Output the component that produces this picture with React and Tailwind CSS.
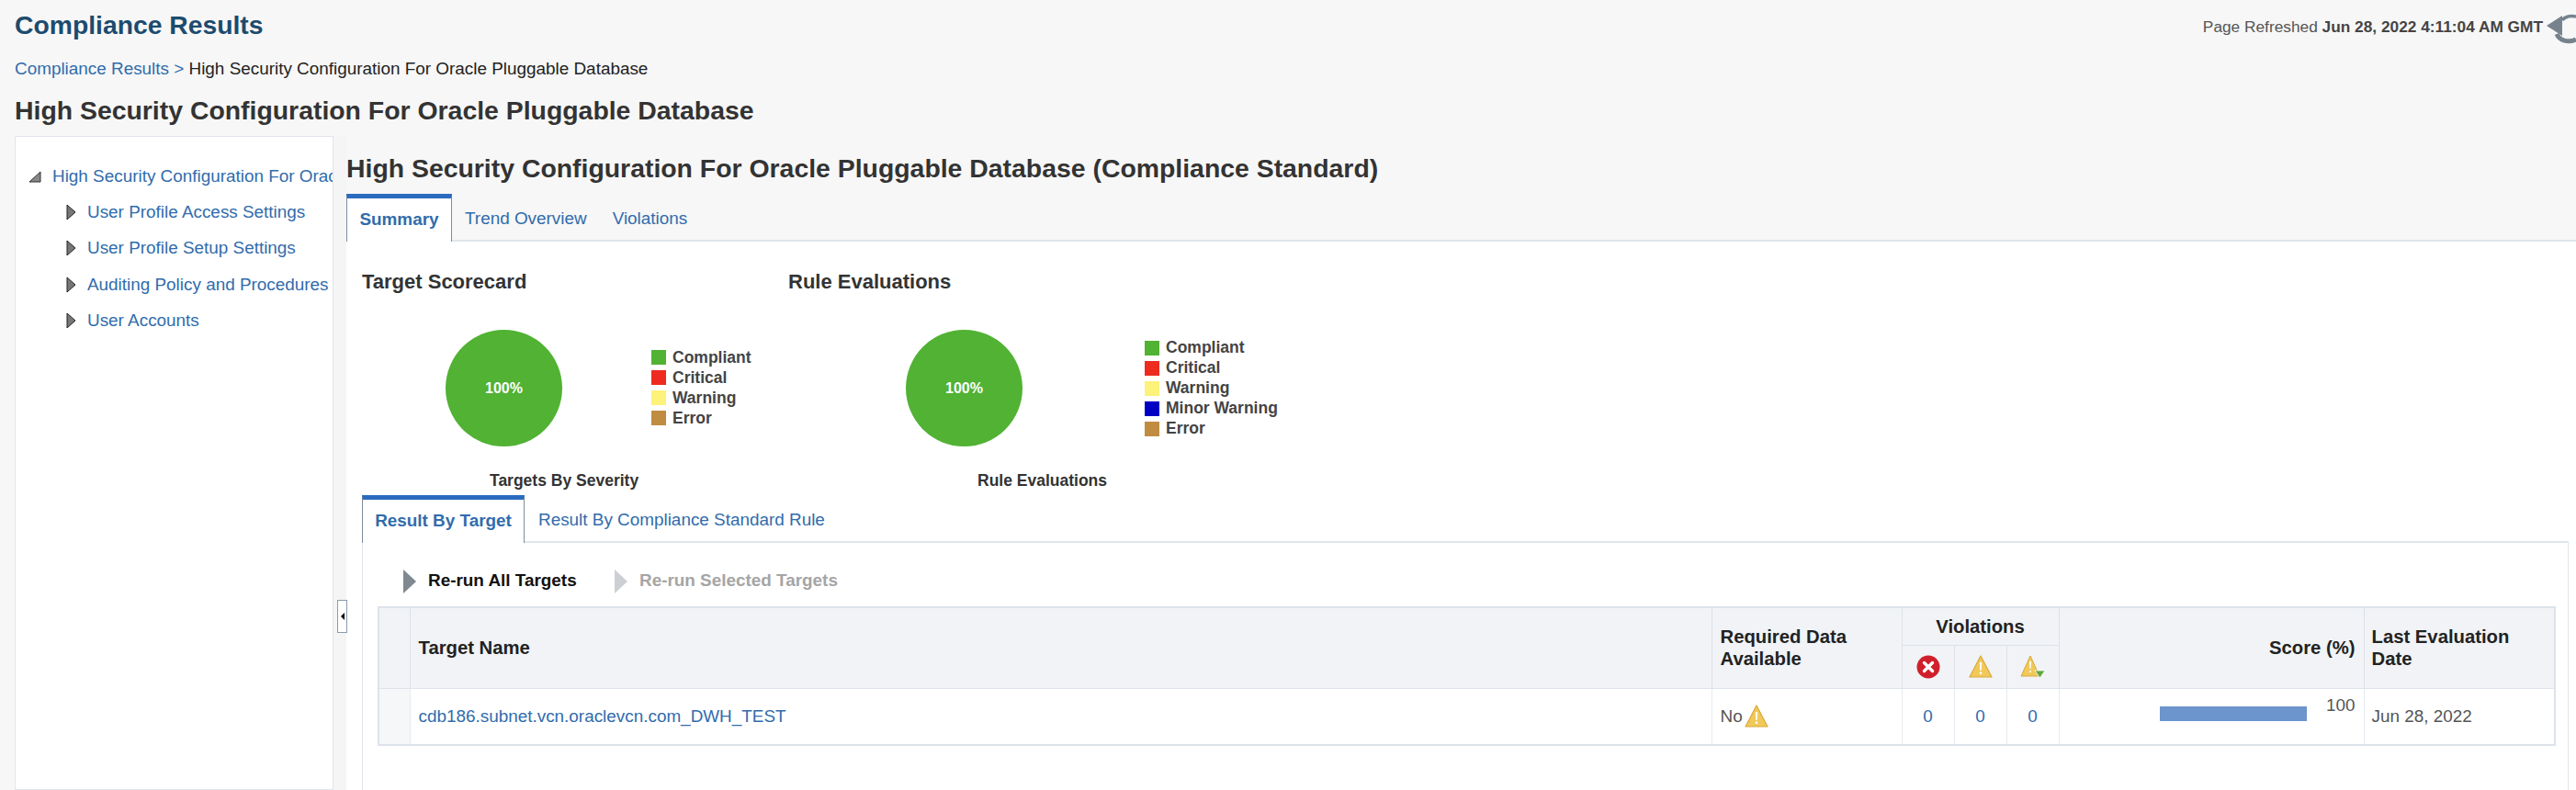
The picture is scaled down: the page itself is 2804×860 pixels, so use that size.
import React from 'react'

const LEGEND_TARGET = [
  { label: 'Compliant', color: 'bg-[#51b233]' },
  { label: 'Critical', color: 'bg-[#ed2c1f]' },
  { label: 'Warning', color: 'bg-[#fdf27a]' },
  { label: 'Error', color: 'bg-[#c08c42]' },
]

const LEGEND_RULE = [
  { label: 'Compliant', color: 'bg-[#51b233]' },
  { label: 'Critical', color: 'bg-[#ed2c1f]' },
  { label: 'Warning', color: 'bg-[#fdf27a]' },
  { label: 'Minor Warning', color: 'bg-[#0000c4]' },
  { label: 'Error', color: 'bg-[#c08c42]' },
]

const TREE = ['User Profile Access Settings', 'User Profile Setup Settings', 'Auditing Policy and Procedures', 'User Accounts']

function Warn({ className }) {
  return (
    <svg viewBox="0 0 26 25" className={className}>
      <path d="M13 1 L25 24 L1 24 Z" fill="#f0c95a" stroke="#d9a93a" strokeWidth="1.2" strokeLinejoin="round" />
      <path d="M11.8 8 h2.4 l-.5 9 h-1.4 Z" fill="#fff" />
      <rect x="11.8" y="18.5" width="2.4" height="2.4" fill="#fff" />
    </svg>
  )
}

function Chart({ legend, caption, className, pieClass, legendClass, captionClass }) {
  return (
    <div className={`flex flex-col shrink-0 ${className}`}>
      <div className={`flex items-center h-[127px] ${pieClass}`}>
        <div className="w-[127px] h-[127px] rounded-full bg-[#51b233] flex items-center justify-center text-white text-[16px] font-bold">
          100%
        </div>
        <div className={`flex flex-col gap-[6px] ${legendClass}`}>
          {legend.map(item => (
            <div key={item.label} className="flex items-center h-[16px] gap-[7px]">
              <span className={`w-[16px] h-[16px] ${item.color}`} />
              <span className="text-[17.5px] font-bold text-[#444]">{item.label}</span>
            </div>
          ))}
        </div>
      </div>
      <div className={`text-[17.5px] font-bold text-[#333] leading-[20px] mt-[27px] ${captionClass}`}>{caption}</div>
    </div>
  )
}

export default function App() {
  return (
    <div className="w-[2804px] h-[860px] overflow-hidden bg-[#f7f7f7] text-[#333] font-['Liberation_Sans',Arial,sans-serif]">
      {/* Header */}
      <div className="flex justify-between items-start pl-4 h-[54px]">
        <h1 className="text-[28.3px] leading-[32px] mt-[11px] font-bold text-[#1d4b6e]">Compliance Results</h1>
        <div className="flex items-start pt-[18px]">
          <span className="text-[17.3px] leading-[22px] text-[#555]">
            Page Refreshed <b className="text-[#444]">Jun 28, 2022 4:11:04 AM GMT</b>
          </span>
          <svg viewBox="0 0 34 40" className="w-[34px] h-[40px] ml-[2px] -mt-[8px] shrink-0">
            <path d="M2 18 L19 7 V29 Z" fill="#76838e" />
            <path d="M19 12 C22 8, 28 7, 34 8" fill="none" stroke="#76838e" strokeWidth="3.5" />
            <path d="M13 27 C16 34, 25 37, 34 33" fill="none" stroke="#76838e" strokeWidth="5" />
          </svg>
        </div>
      </div>
      <div className="pl-4 text-[18.9px] leading-[24px] mt-[9px] text-[#222]">
        <a className="text-[#316cac]">Compliance Results &gt;</a> High Security Configuration For Oracle Pluggable Database
      </div>
      <h2 className="pl-4 text-[28.4px] leading-[32px] font-bold text-[#333] mt-[17px]">High Security Configuration For Oracle Pluggable Database</h2>

      <div className="flex mt-[12px] pl-4 h-[712px]">
        {/* Tree */}
        <aside className="w-[347px] bg-white border border-[#e1e6ec] pt-[31px] overflow-hidden shrink-0">
          <div className="flex items-center h-[24px] whitespace-nowrap">
            <svg viewBox="0 0 14 14" className="w-[14px] h-[14px] ml-[14px] mr-[12px] shrink-0">
              <path d="M13 2 V13 H1 Z" fill="#888" stroke="#333" />
            </svg>
            <a className="text-[18.9px] text-[#316cac]">High Security Configuration For Oracle Pluggable Database</a>
          </div>
          <div className="mt-[15px] flex flex-col gap-[15.4px]">
            {TREE.map(label => (
              <div key={label} className="flex items-center h-[24px] pl-[55px] whitespace-nowrap">
                <svg viewBox="0 0 11 18" className="w-[11px] h-[18px] mr-[12px] shrink-0">
                  <path d="M1 1 L10 9 L1 17 Z" fill="#777" stroke="#222" />
                </svg>
                <a className="text-[18.9px] text-[#316cac]">{label}</a>
              </div>
            ))}
          </div>
        </aside>

        {/* Splitter */}
        <div className="w-[14px] bg-[#f5f5f5] pt-[505px] pl-[4px] shrink-0">
          <div className="relative w-[11px] h-[36px] bg-white border border-[#8a9aae] flex items-center justify-center">
            <span className="w-0 h-0 border-y-[4px] border-y-transparent border-r-[4px] border-r-black" />
          </div>
        </div>

        {/* Main */}
        <main className="flex-1 min-w-0 flex flex-col">
          <h2 className="text-[28.4px] leading-[32px] font-bold text-[#333] mt-[19px]">High Security Configuration For Oracle Pluggable Database (Compliance Standard)</h2>
          <div className="flex items-stretch h-[52px] mt-[12px] border-b-2 border-[#e1e6ec] text-[18.9px] shrink-0">
            <div className="w-[115px] border-t-[5px] border-t-[#2a6bc0] border-x border-x-[#7f8c99] bg-white -mb-[2px] flex items-center justify-center font-bold text-[#316cac]">Summary</div>
            <a className="ml-[14px] pt-[5px] flex items-center text-[#316cac]">Trend Overview</a>
            <a className="ml-[28px] pt-[5px] flex items-center text-[#316cac]">Violations</a>
          </div>

          <div className="flex-1 bg-white pl-[17px] pr-[8px]">
            <div className="flex mt-[31px] h-[24px] items-center text-[22px] font-bold text-[#333]">
              <span className="w-[464px]">Target Scorecard</span>
              <span>Rule Evaluations</span>
            </div>
            <div className="flex mt-[41px]">
              <Chart legend={LEGEND_TARGET} caption="Targets By Severity" className="w-[592px]" pieClass="ml-[91px]" legendClass="ml-[97px] -mt-[1px]" captionClass="ml-[139px]" />
              <Chart legend={LEGEND_RULE} caption="Rule Evaluations" className="w-[500px]" pieClass="" legendClass="ml-[133px]" captionClass="ml-[78px]" />
            </div>

            {/* Sub tabs */}
            <div className="flex items-stretch h-[52px] mt-[6px] border-b-2 border-[#e1e6ec] text-[18.9px]">
              <div className="w-[177px] border-t-[5px] border-t-[#2a6bc0] border-x border-x-[#7f8c99] bg-white -mb-[2px] flex items-center justify-center font-bold text-[#316cac]">Result By Target</div>
              <a className="ml-[15px] pt-[5px] flex items-center text-[#316cac]">Result By Compliance Standard Rule</a>
            </div>

            <div className="border-x border-[#e1e6ec] h-[300px] pl-[16px] pr-[15px]">
              <div className="flex items-center h-[69px] pt-[14px] pl-[28px] text-[18.9px] font-bold">
                <svg viewBox="0 0 14 26" className="w-[14px] h-[26px] mr-[13px]"><path d="M0 0 L14 13 L0 26 Z" fill="#808890" /></svg>
                <span className="text-[#111] w-[203px]">Re-run All Targets</span>
                <svg viewBox="0 0 14 26" className="w-[14px] h-[26px] mr-[13px]"><path d="M0 0 L14 13 L0 26 Z" fill="#ccd0d5" /></svg>
                <span className="text-[#a5a5a5]">Re-run Selected Targets</span>
              </div>

              <table className="w-[2369px] table-fixed border-collapse border-2 border-[#dde3ea] text-[18.9px]">
                <colgroup>
                  <col className="w-[34px]" />
                  <col className="w-[1417px]" />
                  <col className="w-[207px]" />
                  <col className="w-[57px]" />
                  <col className="w-[57px]" />
                  <col className="w-[57px]" />
                  <col className="w-[332px]" />
                  <col className="w-[208px]" />
                </colgroup>
                <thead className="bg-[#f1f3f6] font-bold text-[#222] text-[20.3px]">
                  <tr className="h-[41px]">
                    <th rowSpan={2} className="border border-[#dde3ea]" />
                    <th rowSpan={2} className="border border-[#dde3ea] text-left font-bold pl-[9px]">Target Name</th>
                    <th rowSpan={2} className="border border-[#dde3ea] text-left font-bold pl-[9px] leading-[24px]">Required Data<br />Available</th>
                    <th colSpan={3} className="border border-[#dde3ea] text-center font-bold">Violations</th>
                    <th rowSpan={2} className="border border-[#dde3ea] text-right font-bold pr-[9px]">Score (%)</th>
                    <th rowSpan={2} className="border border-[#dde3ea] text-left font-bold pl-[8px] leading-[24px]">Last Evaluation<br />Date</th>
                  </tr>
                  <tr className="h-[47px]">
                    <th className="border border-[#dde3ea]">
                      <svg viewBox="0 0 26 26" className="w-[26px] h-[26px] mx-auto">
                        <circle cx="13" cy="13" r="12.5" fill="#d0202c" />
                        <path d="M8.5 8.5 L17.5 17.5 M17.5 8.5 L8.5 17.5" stroke="#fff" strokeWidth="3.4" strokeLinecap="round" />
                      </svg>
                    </th>
                    <th className="border border-[#dde3ea]"><Warn className="w-[26px] h-[25px] mx-auto" /></th>
                    <th className="border border-[#dde3ea]">
                      <svg viewBox="0 0 27 26" className="w-[27px] h-[26px] mx-auto">
                        <path d="M11 1 L21 23 L1 23 Z" fill="#f0c95a" stroke="#d9a93a" strokeLinejoin="round" />
                        <path d="M10 7 h2 l-.4 8 h-1.2 Z M10 17 h2 v2 h-2 Z" fill="#fff" />
                        <path d="M16 17 H27 L21.5 25 Z" fill="#5fa83c" stroke="#fff" strokeWidth="0.8" />
                      </svg>
                    </th>
                  </tr>
                </thead>
                <tbody className="text-[#555]">
                  <tr className="h-[62px]">
                    <td className="border border-[#e6eaef] bg-[#f6f7f9]" />
                    <td className="border border-[#e6eaef] pl-[9px]"><a className="text-[#316cac]">cdb186.subnet.vcn.oraclevcn.com_DWH_TEST</a></td>
                    <td className="border border-[#e6eaef] pl-[9px]">
                      <div className="flex items-center">No<Warn className="w-[26px] h-[25px] ml-[2px]" /></div>
                    </td>
                    <td className="border border-[#e6eaef] text-center text-[#316cac]">0</td>
                    <td className="border border-[#e6eaef] text-center text-[#316cac]">0</td>
                    <td className="border border-[#e6eaef] text-center text-[#316cac]">0</td>
                    <td className="border border-[#e6eaef] pr-[9px] align-top pt-[8px]">
                      <div className="flex justify-end items-start gap-[21px]">
                        <div className="w-[160px] h-[16px] mt-[11px] bg-[#6c95cd]" />
                        <span className="leading-[20px]">100</span>
                      </div>
                    </td>
                    <td className="border border-[#e6eaef] pl-[8px]">Jun 28, 2022</td>
                  </tr>
                </tbody>
              </table>
            </div>
          </div>
        </main>
      </div>
    </div>
  )
}
